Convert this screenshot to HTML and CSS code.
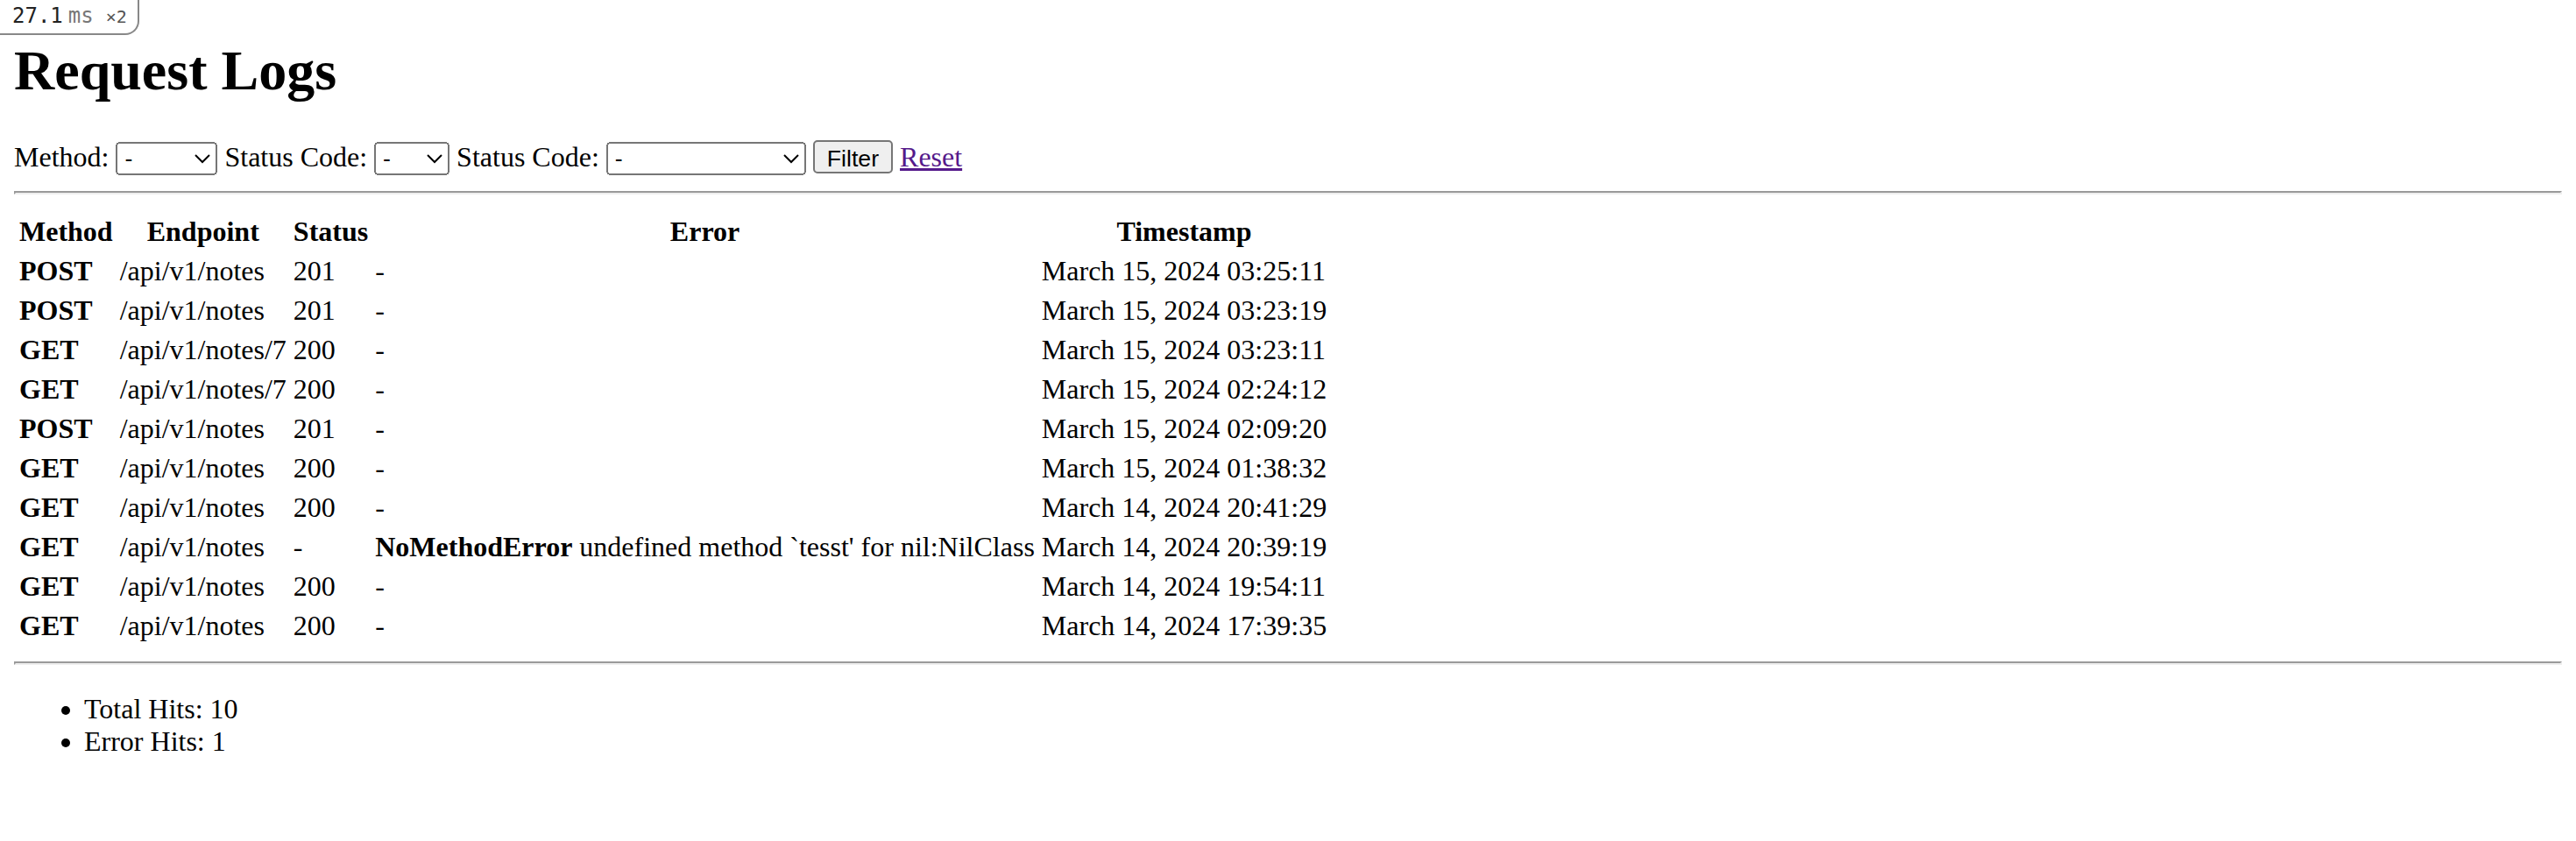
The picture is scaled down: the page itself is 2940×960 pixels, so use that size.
FILE: index.html
```html
<!DOCTYPE html>
<html>
<head>
<meta charset="utf-8">
<title>Request Logs</title>
<link rel="stylesheet" href="styles.css">
</head>
<body>
<div class="profiler-badge"><span class="ms-num">27.1</span><span class="ms-unit">ms</span><span class="ms-count">×2</span></div>
<h1>Request Logs</h1>
<form class="filters">
  <label>Method:</label>
  <select class="sel-method"><option>-</option><option>GET</option><option>POST</option></select>
  <label>Status Code:</label>
  <select class="sel-status"><option>-</option><option>200</option><option>201</option></select>
  <label>Status Code:</label>
  <select class="sel-error"><option>-</option><option>NoMethodError</option></select>
  <button type="button" class="btn">Filter</button>
  <a href="#" class="reset">Reset</a>
</form>
<hr class="hr-top">
<table class="logs">
  <thead>
    <tr><th>Method</th><th>Endpoint</th><th>Status</th><th>Error</th><th>Timestamp</th></tr>
  </thead>
  <tbody>
    <tr><th class="m">POST</th><td>/api/v1/notes</td><td>201</td><td>-</td><td>March 15, 2024 03:25:11</td></tr>
    <tr><th class="m">POST</th><td>/api/v1/notes</td><td>201</td><td>-</td><td>March 15, 2024 03:23:19</td></tr>
    <tr><th class="m">GET</th><td>/api/v1/notes/7</td><td>200</td><td>-</td><td>March 15, 2024 03:23:11</td></tr>
    <tr><th class="m">GET</th><td>/api/v1/notes/7</td><td>200</td><td>-</td><td>March 15, 2024 02:24:12</td></tr>
    <tr><th class="m">POST</th><td>/api/v1/notes</td><td>201</td><td>-</td><td>March 15, 2024 02:09:20</td></tr>
    <tr><th class="m">GET</th><td>/api/v1/notes</td><td>200</td><td>-</td><td>March 15, 2024 01:38:32</td></tr>
    <tr><th class="m">GET</th><td>/api/v1/notes</td><td>200</td><td>-</td><td>March 14, 2024 20:41:29</td></tr>
    <tr><th class="m">GET</th><td>/api/v1/notes</td><td>-</td><td><strong>NoMethodError</strong> undefined method `tesst' for nil:NilClass</td><td>March 14, 2024 20:39:19</td></tr>
    <tr><th class="m">GET</th><td>/api/v1/notes</td><td>200</td><td>-</td><td>March 14, 2024 19:54:11</td></tr>
    <tr><th class="m">GET</th><td>/api/v1/notes</td><td>200</td><td>-</td><td>March 14, 2024 17:39:35</td></tr>
  </tbody>
</table>
<hr>
<ul class="stats">
  <li>Total Hits: 10</li>
  <li>Error Hits: 1</li>
</ul>
</body>
</html>
```
FILE: styles.css
```css
html {
  zoom: 2;
}
body {
  margin: 8px;
  font-family: "Liberation Serif", "Times New Roman", serif;
  font-size: 16px;
  color: #000;
  background: #fff;
}
.profiler-badge {
  position: absolute;
  top: 0;
  left: 0;
  display: flex;
  align-items: baseline;
  gap: 3px;
  padding: 2px 6px 3px 7px;
  border: 1px solid #888;
  border-top: none;
  border-left: none;
  border-bottom-right-radius: 8px;
  font-family: "DejaVu Sans Mono", monospace;
  font-size: 12px;
  background: #fff;
}
.ms-num { color: #222; }
.ms-unit { color: #777; }
.ms-count { color: #555; font-size: 10px; margin-left: 4px; }
h1 {
  font-size: 2em;
  margin: 14px 0 21px;
}
.filters label { font-size: 16px; }
select, .btn {
  font-family: "Liberation Sans", Arial, sans-serif;
  font-size: 13.33px;
  height: 19px;
  vertical-align: baseline;
}
.sel-method { width: 58px; }
.sel-status { width: 43px; }
.sel-error { width: 114px; }
.reset { color: #551a8b; }
.hr-top { margin: 9px 0; }
.logs th.m { text-align: left; }
.stats { margin: 1em 0; }
```
